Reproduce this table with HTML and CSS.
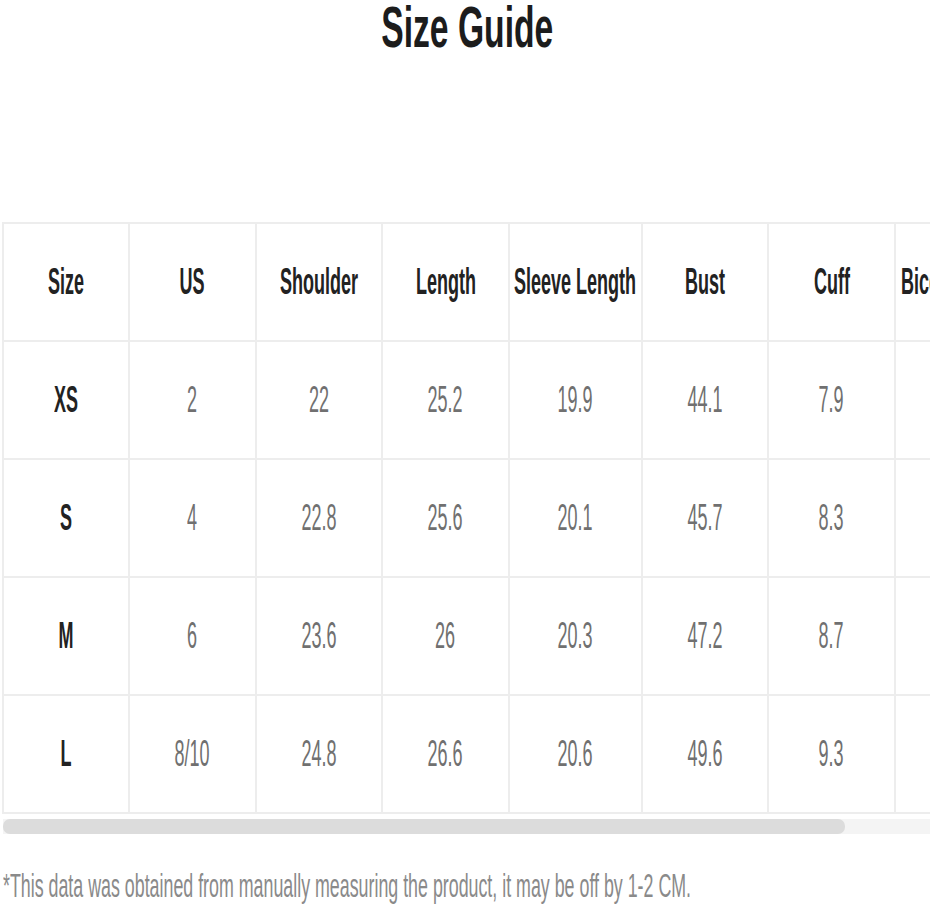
FILE: index.html
```html
<!DOCTYPE html>
<html lang="en">
<head>
<meta charset="utf-8">
<title>Size Guide</title>
<link rel="stylesheet" href="styles.css">
</head>
<body>
<h1 class="title"><span class="sq-title">Size Guide</span></h1>
<div class="table-wrap">
  <div class="table-view">
    <table class="size-table">
      <thead>
        <tr>
          <th><span class="sq">Size</span></th>
          <th><span class="sq">US</span></th>
          <th><span class="sq">Shoulder</span></th>
          <th><span class="sq">Length</span></th>
          <th><span class="sq">Sleeve Length</span></th>
          <th><span class="sq">Bust</span></th>
          <th><span class="sq">Cuff</span></th>
          <th><span class="sq">Bicep Length</span></th>
        </tr>
      </thead>
      <tbody>
        <tr>
          <th><span class="sq">XS</span></th>
          <td><span class="sq">2</span></td>
          <td><span class="sq">22</span></td>
          <td><span class="sq">25.2</span></td>
          <td><span class="sq">19.9</span></td>
          <td><span class="sq">44.1</span></td>
          <td><span class="sq">7.9</span></td>
          <td><span class="sq">15.4</span></td>
        </tr>
        <tr>
          <th><span class="sq">S</span></th>
          <td><span class="sq">4</span></td>
          <td><span class="sq">22.8</span></td>
          <td><span class="sq">25.6</span></td>
          <td><span class="sq">20.1</span></td>
          <td><span class="sq">45.7</span></td>
          <td><span class="sq">8.3</span></td>
          <td><span class="sq">16.1</span></td>
        </tr>
        <tr>
          <th><span class="sq">M</span></th>
          <td><span class="sq">6</span></td>
          <td><span class="sq">23.6</span></td>
          <td><span class="sq">26</span></td>
          <td><span class="sq">20.3</span></td>
          <td><span class="sq">47.2</span></td>
          <td><span class="sq">8.7</span></td>
          <td><span class="sq">16.9</span></td>
        </tr>
        <tr>
          <th><span class="sq">L</span></th>
          <td><span class="sq">8/10</span></td>
          <td><span class="sq">24.8</span></td>
          <td><span class="sq">26.6</span></td>
          <td><span class="sq">20.6</span></td>
          <td><span class="sq">49.6</span></td>
          <td><span class="sq">9.3</span></td>
          <td><span class="sq">17.7</span></td>
        </tr>
      </tbody>
    </table>
  </div>
  <div class="scrollbar"><div class="thumb"></div></div>
</div>
<p class="note"><span class="sq-note">*This data was obtained from manually measuring the product, it may be off by 1-2 CM.</span></p>
</body>
</html>
```
FILE: styles.css
```css
html, body {
  margin: 0;
  padding: 0;
  background: #ffffff;
}
body {
  width: 934px;
  height: 915px;
  overflow: hidden;
  font-family: "Liberation Sans", Arial, sans-serif;
}
.title {
  margin: 0;
  height: 58px;
  font-size: 58px;
  line-height: 54px;
  font-weight: 700;
  color: #1c1c1c;
  text-align: center;
}
.sq-title {
  display: inline-block;
  white-space: nowrap;
  transform: scaleX(0.58);
  margin: 0 -70px;
}
.table-wrap {
  margin: 164px 0 0 2px;
  width: 928px;
}
.table-view {
  width: 928px;
  overflow: hidden;
}
.size-table {
  border-collapse: collapse;
  table-layout: fixed;
  width: 1018px;
}
.size-table th,
.size-table td {
  width: 124px;
  height: 116px;
  padding: 0;
  border: 2px solid #ededed;
  text-align: center;
  vertical-align: middle;
  font-size: 36px;
}
.size-table thead th:nth-child(2),
.size-table thead th:nth-child(4),
.size-table thead th:nth-child(7) {
  width: 125px;
}
.size-table thead th:nth-child(5) {
  width: 131px;
}
.size-table th {
  font-weight: 700;
  color: #222222;
}
.size-table td {
  font-weight: 400;
  color: #707070;
}
.sq {
  display: inline-block;
  white-space: nowrap;
  transform: scaleX(0.5);
  margin: 0 -70px;
}
.scrollbar {
  margin-top: 5px;
  margin-left: 1px;
  width: 927px;
  height: 15px;
  background: #f4f4f4;
}
.thumb {
  width: 842px;
  height: 15px;
  border-radius: 7px;
  background: #dcdcdc;
}
.note {
  margin: 32px 0 0 0;
  font-size: 33px;
  line-height: 40px;
  color: #8a8a8a;
}
.sq-note {
  display: inline-block;
  white-space: nowrap;
  transform: scaleX(0.54);
  transform-origin: left center;
  margin-left: 3px;
}
```
